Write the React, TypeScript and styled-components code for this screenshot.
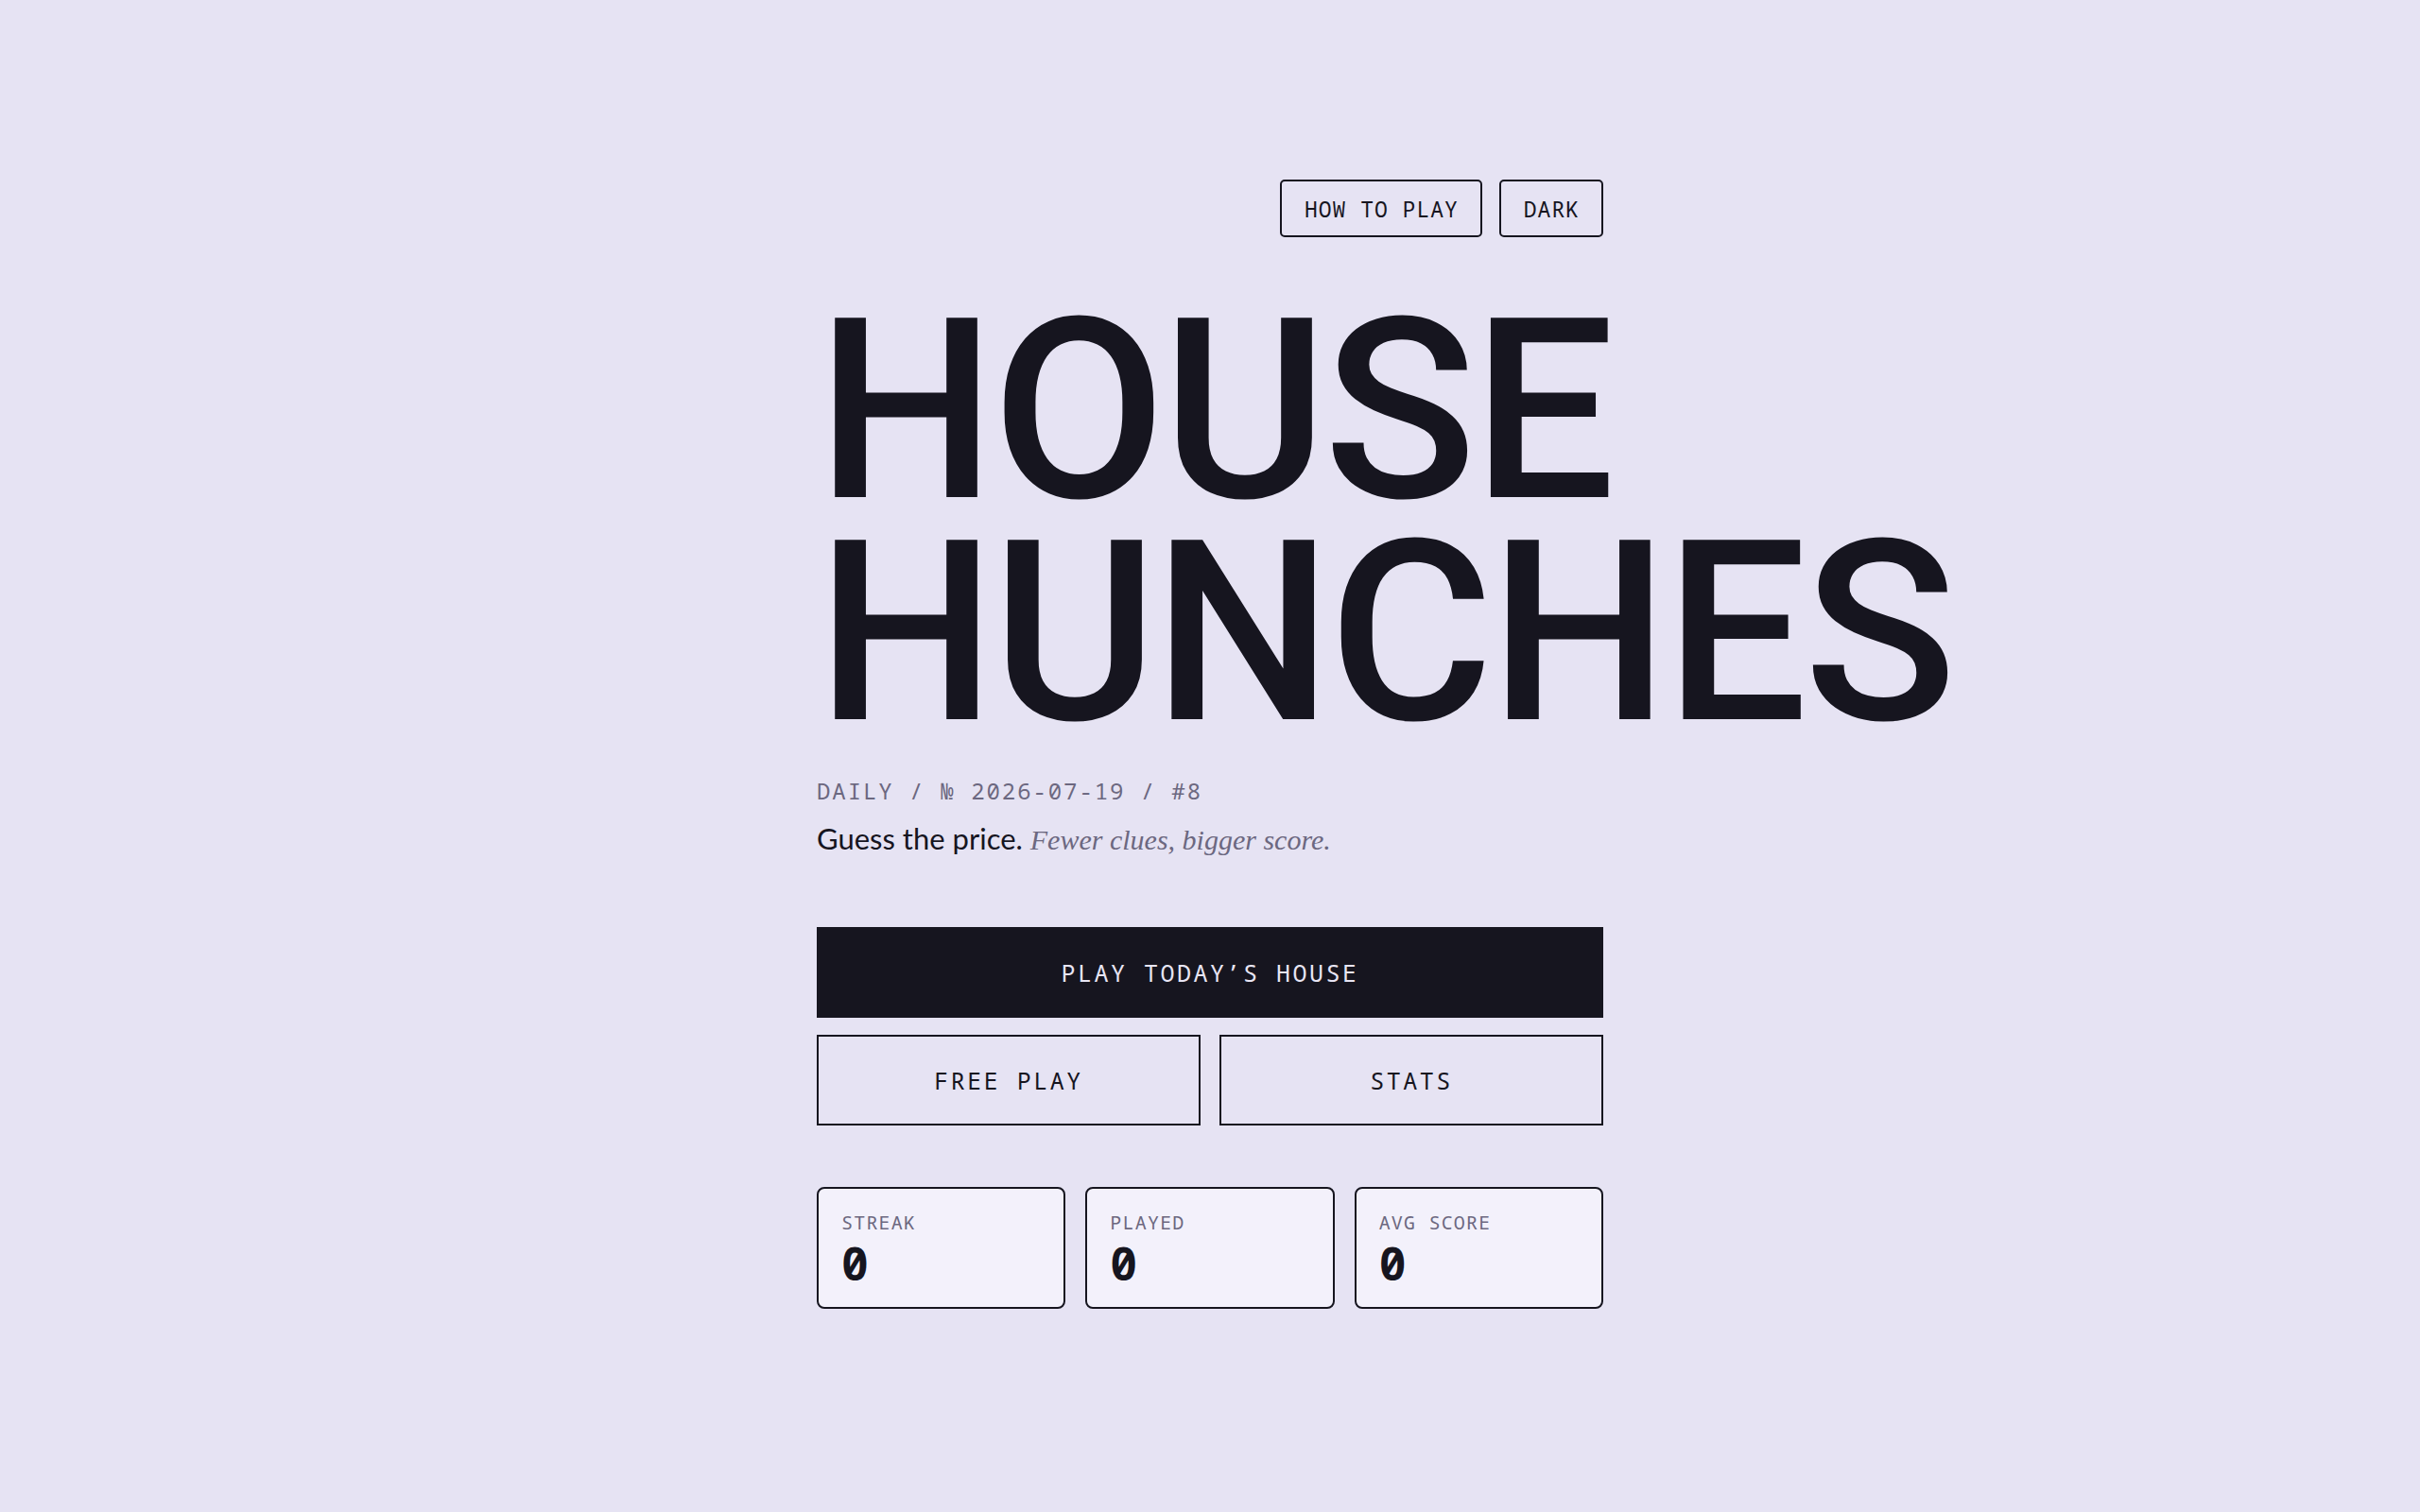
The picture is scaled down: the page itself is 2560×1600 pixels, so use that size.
import React from 'react'
import styled, { createGlobalStyle } from 'styled-components'

const ink = '#16151f'
const muted = '#6c6880'
const paper = '#e6e3f3'
const mono = '"Noto Sans Mono", "DejaVu Sans Mono", monospace'

const GlobalStyle = createGlobalStyle`
  html, body {
    margin: 0;
    padding: 0;
    background: ${paper};
  }
  body {
    font-family: ${mono};
    color: ${ink};
  }
`

const Page = styled.main`
  min-height: 1600px;
  display: flex;
  justify-content: center;
  padding-top: 190px;
  box-sizing: border-box;
`

const Column = styled.div`
  width: 832px;
  display: flex;
  flex-direction: column;
`

const TopBar = styled.nav`
  display: flex;
  justify-content: flex-end;
  gap: 18px;
`

const ChipButton = styled.button`
  height: 61px;
  padding: 0 23px 0 24px;
  background: transparent;
  border: 2px solid ${ink};
  border-radius: 5px;
  font-family: ${mono};
  font-size: 23px;
  letter-spacing: 1px;
  color: ${ink};
  cursor: pointer;
`

const Title = styled.h1`
  margin: 66px 0 0;
  font-family: Roboto, Inter, "Liberation Sans", sans-serif;
  font-weight: 500;
  font-size: 267px;
  line-height: 235px;
  letter-spacing: -0.015em;
  white-space: nowrap;
  color: ${ink};
`

const Meta = styled.div`
  margin-top: 35px;
  font-size: 24px;
  line-height: 30px;
  letter-spacing: 0.08em;
  color: ${muted};
`

const Tagline = styled.p`
  margin: 15px 0 0;
  font-family: Lato, "Noto Sans", sans-serif;
  font-size: 31px;
  line-height: 40px;
  color: ${ink};
`

const Aside = styled.em`
  font-family: "Liberation Serif", serif;
  font-style: italic;
  font-size: 30px;
  color: ${muted};
`

const Actions = styled.div`
  margin-top: 72px;
  display: grid;
  grid-template-columns: 1fr 1fr;
  gap: 18px 20px;
`

const ActionButton = styled.button<{ $primary?: boolean }>`
  grid-column: ${({ $primary }) => ($primary ? '1 / -1' : 'auto')};
  height: 96px;
  border: 2px solid ${ink};
  background: ${({ $primary }) => ($primary ? ink : 'transparent')};
  color: ${({ $primary }) => ($primary ? '#e8e5f4' : ink)};
  font-family: ${mono};
  font-size: 25px;
  letter-spacing: 0.1em;
  cursor: pointer;
`

const Stats = styled.div`
  margin-top: 65px;
  display: grid;
  grid-template-columns: repeat(3, 1fr);
  gap: 21px;
`

const StatCard = styled.div`
  height: 129px;
  box-sizing: border-box;
  padding: 24px 24px 0;
  background: #f3f1fb;
  border: 2px solid ${ink};
  border-radius: 8px;
`

const StatLabel = styled.div`
  font-size: 20px;
  line-height: 24px;
  letter-spacing: 0.06em;
  color: ${muted};
`

const StatValue = styled.div`
  margin-top: 7px;
  font-size: 48px;
  font-weight: 700;
  line-height: 1;
  color: ${ink};
`

const stats = [
  { label: 'STREAK', value: '0' },
  { label: 'PLAYED', value: '0' },
  { label: 'AVG SCORE', value: '0' },
]

export default function App() {
  return (
    <>
      <GlobalStyle />
      <Page>
        <Column>
          <TopBar>
            <ChipButton>HOW TO PLAY</ChipButton>
            <ChipButton>DARK</ChipButton>
          </TopBar>
          <Title>
            HOUSE
            <br />
            HUNCHES
          </Title>
          <Meta>DAILY / № 2026-07-19 / #8</Meta>
          <Tagline>
            Guess the price. <Aside>Fewer clues, bigger score.</Aside>
          </Tagline>
          <Actions>
            <ActionButton $primary>PLAY TODAY’S HOUSE</ActionButton>
            <ActionButton>FREE PLAY</ActionButton>
            <ActionButton>STATS</ActionButton>
          </Actions>
          <Stats>
            {stats.map((s) => (
              <StatCard key={s.label}>
                <StatLabel>{s.label}</StatLabel>
                <StatValue>{s.value}</StatValue>
              </StatCard>
            ))}
          </Stats>
        </Column>
      </Page>
    </>
  )
}
